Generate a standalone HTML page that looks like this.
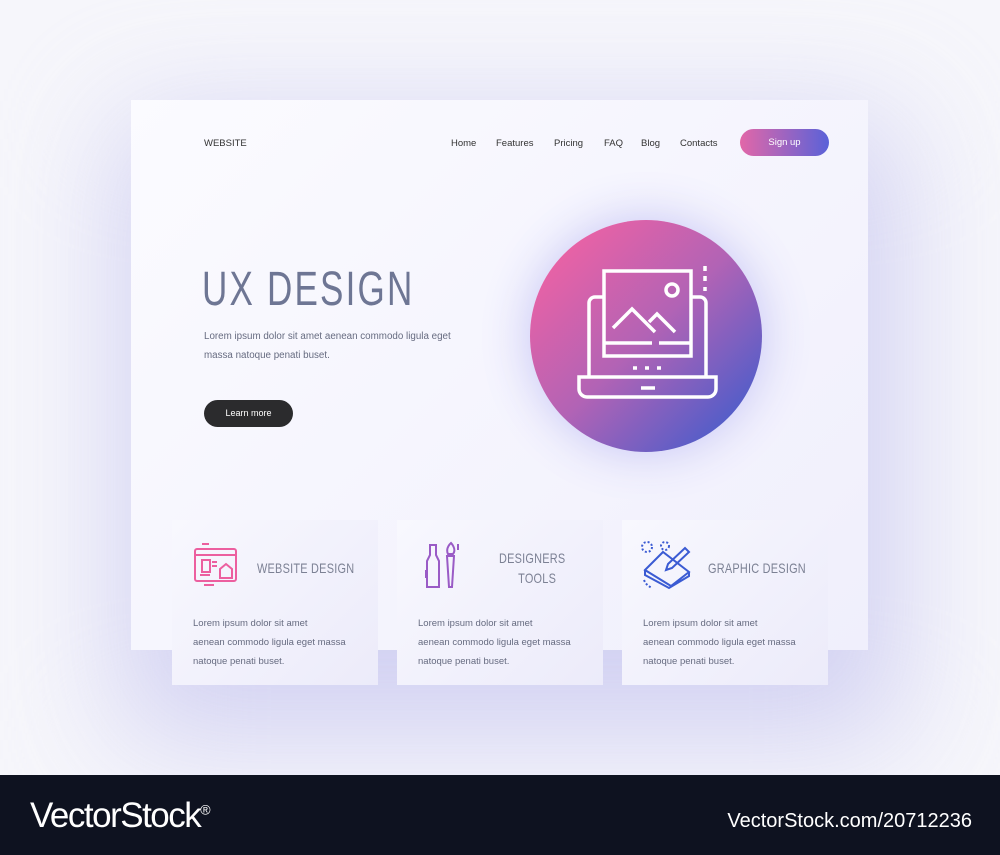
<!DOCTYPE html>
<html><head><style>
*{margin:0;padding:0;box-sizing:border-box}
body{width:1000px;height:855px;overflow:hidden;background:#f6f6fb;font-family:"Liberation Sans",sans-serif;position:relative}
.glow{position:absolute;left:120px;top:120px;width:780px;height:620px;background:#c9c8f0;filter:blur(60px);opacity:.8}
.main{position:absolute;left:131px;top:100px;width:737px;height:550px;background:linear-gradient(135deg,#fbfbff,#f0effc);}
.nav{position:absolute;font-size:9.5px;color:#333;top:138px}
.btn{position:absolute;left:740px;top:129px;width:89px;height:27px;border-radius:14px;background:linear-gradient(90deg,#e267a8,#5a62d8);color:#fff;font-size:9.5px;text-align:center;line-height:27px}
h1{position:absolute;left:202px;top:262px;font-weight:normal;font-size:48px;color:#6e7694;letter-spacing:3px;transform:scaleX(.73);transform-origin:left;white-space:nowrap}
.p{position:absolute;left:204px;font-size:9.8px;color:#666b80}
.lm{position:absolute;left:204px;top:400px;width:89px;height:27px;border-radius:14px;background:#2b2b2d;color:#fff;font-size:9px;text-align:center;line-height:27px}
.circ{position:absolute;left:530px;top:220px;width:232px;height:232px;border-radius:50%;background:linear-gradient(135deg,#ee62a4 10%,#b263b5 50%,#3d5ccd 95%);box-shadow:0 0 50px #c5c4f5}
.card{position:absolute;top:520px;width:206px;height:165px;background:linear-gradient(135deg,#f8f8fe,#ecebfa)}
.card .t{position:absolute;font-size:14px;color:#7c8194;letter-spacing:.3px;text-align:center;line-height:20px;transform:scaleX(.78);transform-origin:left;white-space:nowrap}
.card .d{position:absolute;left:21px;top:94px;font-size:9.5px;color:#666b80;line-height:19px;white-space:nowrap}
.foot{position:absolute;left:0;top:775px;width:1000px;height:80px;background:#0e1220;color:#fff}
</style></head><body>
<div class="glow"></div>
<div class="main"></div>
<div class="nav" style="left:204px">WEBSITE</div>
<div class="nav" style="left:451px">Home</div>
<div class="nav" style="left:496px">Features</div>
<div class="nav" style="left:554px">Pricing</div>
<div class="nav" style="left:604px">FAQ</div>
<div class="nav" style="left:641px">Blog</div>
<div class="nav" style="left:680px">Contacts</div>
<div class="btn">Sign up</div>
<h1>UX DESIGN</h1>
<div class="p" style="top:331px">Lorem ipsum dolor sit amet aenean commodo ligula eget</div>
<div class="p" style="top:350px">massa natoque penati buset.</div>
<div class="lm">Learn more</div>
<div class="circ"></div>
<svg style="position:absolute;left:0;top:0" width="1000" height="855" fill="none" stroke="#fff" stroke-width="3.5">
<path d="M603 297h-8a6 6 0 0 0-6 6v73M692 297h8a6 6 0 0 1 6 6v73"/>
<path d="M579 377h137v12a8 8 0 0 1-8 8h-121a8 8 0 0 1-8-8z"/>
<path d="M641 388h14M633 368h4M645 368h4M657 368h4"/>
<rect x="604" y="271" width="87" height="85"/>
<path d="M604 343h48M659 343h32M613 328l19-19 23 23M649 322l8-8 18 18"/>
<circle cx="672" cy="290" r="6"/>
<path d="M705 266v5M705 276v5M705 287v4"/>
</svg>
<div class="card" style="left:172px"><div class="t" style="left:85px;top:38px">WEBSITE DESIGN</div><div class="d">Lorem ipsum dolor sit amet<br>aenean commodo ligula eget massa<br>natoque penati buset.</div>
<svg style="position:absolute;left:20px;top:22px" width="50" height="50" fill="none" stroke="#ec5f9f" stroke-width="2"><rect x="3" y="7" width="41" height="32" rx="2"/><path d="M3 13h41M10 2h7M10 18h8v12h-8zM20 20h5M20 24h5M8 33h10M12 43h10M28 27l6-5 6 5v9h-12z"/></svg></div>
<div class="card" style="left:397px"><div class="t" style="left:102px;top:28px">DESIGNERS<br>&nbsp;&nbsp;&nbsp;TOOLS</div><div class="d">Lorem ipsum dolor sit amet<br>aenean commodo ligula eget massa<br>natoque penati buset.</div>
<svg style="position:absolute;left:25px;top:20px" width="40" height="50" fill="none" stroke="#9a5bc6" stroke-width="2"><path d="M8 5h6v10l3 6v26h-12v-26l3-6zM26 14c-3-6 3-11 3-11s6 6 2 11zM25 16h7l-2 31h-3z M4 30v8M36 4v6"/></svg></div>
<div class="card" style="left:622px"><div class="t" style="left:86px;top:38px">GRAPHIC DESIGN</div><div class="d">Lorem ipsum dolor sit amet<br>aenean commodo ligula eget massa<br>natoque penati buset.</div>
<svg style="position:absolute;left:18px;top:20px" width="52" height="50" fill="none" stroke="#3b5bd3" stroke-width="2"><path d="M5 30l18-18 26 20-18 14z M5 30v5l24 13 20-12v-4M28 24l17-16 4 4-17 16-6 2z"/><circle cx="7" cy="7" r="5" stroke-dasharray="2 2"/><circle cx="25" cy="6" r="4" stroke-dasharray="2 2"/><path d="M4 40c2 5 6 7 8 8" stroke-dasharray="2 2"/></svg></div>
<div class="foot">
<div style="position:absolute;left:30px;top:21px;font-size:35px;letter-spacing:-1.5px">VectorStock<sup style="font-size:14px">®</sup></div>
<div style="position:absolute;right:28px;top:35px;font-size:20px">VectorStock.com/20712236</div>
</div>
</body></html>
